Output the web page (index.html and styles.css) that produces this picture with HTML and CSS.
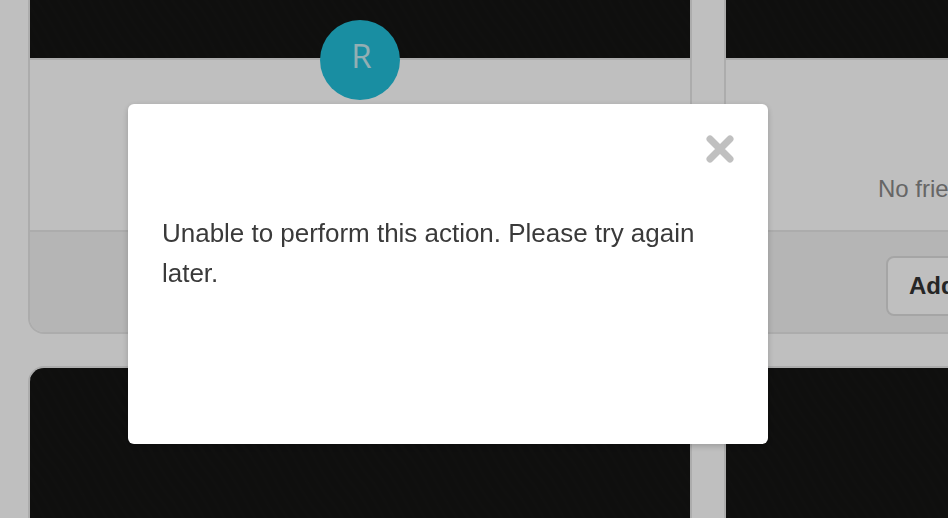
FILE: index.html
```html
<!DOCTYPE html>
<html lang="en">
<head>
    <meta charset="UTF-8">
    <title>Friends</title>
    <link rel="stylesheet" href="styles.css">
</head>
<body>

    <!-- Card grid behind the dialog -->
    <div class="cards">
        <div class="card card-top">
            <div class="banner banner-top"></div>
            <div class="card-body"></div>
            <div class="card-foot"></div>
            <div class="avatar">R</div>
        </div>
        <div class="card card-top">
            <div class="banner banner-top"></div>
            <div class="card-body">
                <p class="empty">No friends yet</p>
            </div>
            <div class="card-foot">
                <button class="add-button">Add friend</button>
            </div>
        </div>
        <div class="card">
            <div class="banner"></div>
        </div>
        <div class="card">
            <div class="banner"></div>
        </div>
    </div>

    <!-- Error dialog -->
    <div class="overlay">
        <div class="dialog">
            <svg class="close" viewBox="0 0 28 28" aria-label="Close">
                <path d="M4 4 L24 24 M24 4 L4 24"></path>
            </svg>
            <p class="message">Unable to perform this action. Please try again later.</p>
        </div>
    </div>

</body>
</html>
```

FILE: styles.css
```css
/* page */
html, body { height: 100%; }
body { margin: 0; overflow: hidden; background: #fff; font-family: "Liberation Sans", Arial, sans-serif; color: #333; }

/* cards */
.cards { display: grid; grid-template-columns: 664px 664px; column-gap: 32px; row-gap: 32px; padding-left: 28px; }
.card { position: relative; border: 2px solid #e6e6e6; border-radius: 16px; overflow: hidden; background: #fff; }
.card-top { border-top: none; border-radius: 0 0 16px 16px; }
.banner { height: 300px; background: #141413 url("data:image/svg+xml,%3Csvg xmlns='http://www.w3.org/2000/svg' width='1000' height='400'%3E%3Cdefs%3E%3Cpattern id='p' width='9' height='90' patternUnits='userSpaceOnUse' patternTransform='rotate(-32)'%3E%3Cpath d='M4.5 0 C9 30 0 60 4.5 90' fill='none' stroke='%23161615' stroke-width='3'/%3E%3C/pattern%3E%3C/defs%3E%3Crect width='1000' height='400' fill='url(%23p)'/%3E%3C/svg%3E") no-repeat; }
.banner-top { height: 58px; border-bottom: 2px solid #e6e6e6; }
.card-body { height: 172px; box-sizing: border-box; border-bottom: 2px solid #e6e6e6; overflow: hidden; white-space: nowrap; }
.card-foot { height: 100px; box-sizing: border-box; padding: 24px 0 0 160px; background: #f2f2f2; white-space: nowrap; }

.avatar { position: absolute; left: 290px; top: 20px; width: 80px; height: 80px; box-sizing: border-box; padding-left: 3px; border-radius: 50%; background: #22bed9; color: #c4e8ef; font-family: "Open Sans", sans-serif; font-size: 33px; font-weight: 400; line-height: 71px; text-align: center; }
.empty { margin: 115px 0 0 152px; font-size: 24px; color: #888; }
.add-button { width: 200px; height: 60px; padding: 0 0 0 21px; text-align: left; border: 2px solid #ddd; border-radius: 8px; background: #fff; color: #333; font-family: inherit; font-size: 24px; font-weight: bold; }

/* dialog */
.overlay { position: fixed; top: 0; left: 0; right: 0; bottom: 0; background: rgba(0, 0, 0, 0.25); }
.dialog { position: absolute; left: 128px; top: 104px; width: 640px; height: 340px; box-sizing: border-box; padding: 109px 34px 0; background: #fff; border-radius: 6px; box-shadow: 0 2px 6px rgba(0, 0, 0, 0.2); }
.close { position: absolute; left: 577.5px; top: 31px; width: 28px; height: 28px; }
.close path { fill: none; stroke: #c0c0c0; stroke-width: 7; stroke-linecap: round; }
.message { margin: 0; font-size: 26px; line-height: 40px; color: #3a3a3a; letter-spacing: -0.02px; }
```
